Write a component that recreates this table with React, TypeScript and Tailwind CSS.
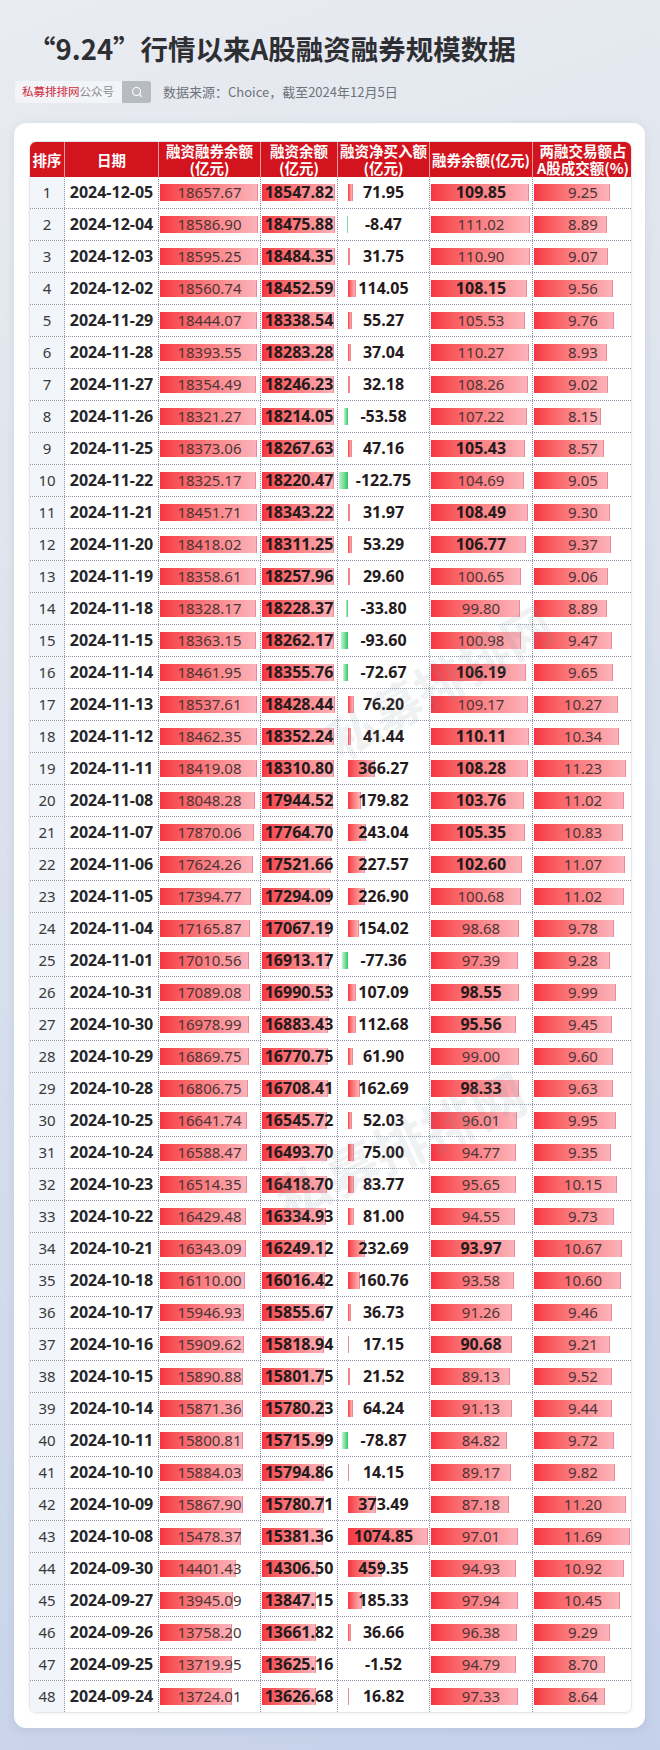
import { Search } from "lucide-react";

type Row = {
  date: string;
  total: number;
  fin: number;
  net: number;
  sec: number;
  secBold: boolean;
  pct: number;
};

const raw: [string, number, number, number, number, boolean, number][] = [
  ["2024-12-05", 18657.67, 18547.82, 71.95, 109.85, true, 9.25],
  ["2024-12-04", 18586.9, 18475.88, -8.47, 111.02, false, 8.89],
  ["2024-12-03", 18595.25, 18484.35, 31.75, 110.9, false, 9.07],
  ["2024-12-02", 18560.74, 18452.59, 114.05, 108.15, true, 9.56],
  ["2024-11-29", 18444.07, 18338.54, 55.27, 105.53, false, 9.76],
  ["2024-11-28", 18393.55, 18283.28, 37.04, 110.27, false, 8.93],
  ["2024-11-27", 18354.49, 18246.23, 32.18, 108.26, false, 9.02],
  ["2024-11-26", 18321.27, 18214.05, -53.58, 107.22, false, 8.15],
  ["2024-11-25", 18373.06, 18267.63, 47.16, 105.43, true, 8.57],
  ["2024-11-22", 18325.17, 18220.47, -122.75, 104.69, false, 9.05],
  ["2024-11-21", 18451.71, 18343.22, 31.97, 108.49, true, 9.3],
  ["2024-11-20", 18418.02, 18311.25, 53.29, 106.77, true, 9.37],
  ["2024-11-19", 18358.61, 18257.96, 29.6, 100.65, false, 9.06],
  ["2024-11-18", 18328.17, 18228.37, -33.8, 99.8, false, 8.89],
  ["2024-11-15", 18363.15, 18262.17, -93.6, 100.98, false, 9.47],
  ["2024-11-14", 18461.95, 18355.76, -72.67, 106.19, true, 9.65],
  ["2024-11-13", 18537.61, 18428.44, 76.2, 109.17, false, 10.27],
  ["2024-11-12", 18462.35, 18352.24, 41.44, 110.11, true, 10.34],
  ["2024-11-11", 18419.08, 18310.8, 366.27, 108.28, true, 11.23],
  ["2024-11-08", 18048.28, 17944.52, 179.82, 103.76, true, 11.02],
  ["2024-11-07", 17870.06, 17764.7, 243.04, 105.35, true, 10.83],
  ["2024-11-06", 17624.26, 17521.66, 227.57, 102.6, true, 11.07],
  ["2024-11-05", 17394.77, 17294.09, 226.9, 100.68, false, 11.02],
  ["2024-11-04", 17165.87, 17067.19, 154.02, 98.68, false, 9.78],
  ["2024-11-01", 17010.56, 16913.17, -77.36, 97.39, false, 9.28],
  ["2024-10-31", 17089.08, 16990.53, 107.09, 98.55, true, 9.99],
  ["2024-10-30", 16978.99, 16883.43, 112.68, 95.56, true, 9.45],
  ["2024-10-29", 16869.75, 16770.75, 61.9, 99.0, false, 9.6],
  ["2024-10-28", 16806.75, 16708.41, 162.69, 98.33, true, 9.63],
  ["2024-10-25", 16641.74, 16545.72, 52.03, 96.01, false, 9.95],
  ["2024-10-24", 16588.47, 16493.7, 75.0, 94.77, false, 9.35],
  ["2024-10-23", 16514.35, 16418.7, 83.77, 95.65, false, 10.15],
  ["2024-10-22", 16429.48, 16334.93, 81.0, 94.55, false, 9.73],
  ["2024-10-21", 16343.09, 16249.12, 232.69, 93.97, true, 10.67],
  ["2024-10-18", 16110.0, 16016.42, 160.76, 93.58, false, 10.6],
  ["2024-10-17", 15946.93, 15855.67, 36.73, 91.26, false, 9.46],
  ["2024-10-16", 15909.62, 15818.94, 17.15, 90.68, true, 9.21],
  ["2024-10-15", 15890.88, 15801.75, 21.52, 89.13, false, 9.52],
  ["2024-10-14", 15871.36, 15780.23, 64.24, 91.13, false, 9.44],
  ["2024-10-11", 15800.81, 15715.99, -78.87, 84.82, false, 9.72],
  ["2024-10-10", 15884.03, 15794.86, 14.15, 89.17, false, 9.82],
  ["2024-10-09", 15867.9, 15780.71, 373.49, 87.18, false, 11.2],
  ["2024-10-08", 15478.37, 15381.36, 1074.85, 97.01, false, 11.69],
  ["2024-09-30", 14401.43, 14306.5, 459.35, 94.93, false, 10.92],
  ["2024-09-27", 13945.09, 13847.15, 185.33, 97.94, false, 10.45],
  ["2024-09-26", 13758.2, 13661.82, 36.66, 96.38, false, 9.29],
  ["2024-09-25", 13719.95, 13625.16, -1.52, 94.79, false, 8.7],
  ["2024-09-24", 13724.01, 13626.68, 16.82, 97.33, false, 8.64],
];

const rows: Row[] = raw.map(([date, total, fin, net, sec, secBold, pct]) => ({
  date, total, fin, net, sec, secBold, pct,
}));

const maxTotal = Math.max(...rows.map(r => r.total));
const maxFin = Math.max(...rows.map(r => r.fin));
const maxSec = Math.max(...rows.map(r => r.sec));
const maxPct = Math.max(...rows.map(r => r.pct));
const maxPos = Math.max(...rows.map(r => r.net));
const maxNeg = Math.max(...rows.map(r => -r.net));

const GRID = "grid grid-cols-[35px_94px_102px_77px_92px_103px_100px]";
const NUM = "'Noto Sans', 'Noto Sans CJK SC', sans-serif";
const CJK = "'Noto Sans CJK SC', sans-serif";

const BarCell = ({ value, max, width, bold, last }: { value: number; max: number; width: number; bold?: boolean; last?: boolean }) => {
  const w = ((width - 4) * value) / max;
  return (
    <div className={last ? "relative flex items-center justify-center h-full" : "relative flex items-center justify-center h-full border-r border-dotted border-[#8e98a8]"}>
      <div
        className="absolute left-px top-[7px] h-[17px] bg-linear-to-r from-[#f53442] to-[#fbb3bb] border-r border-[#f08893]"
        style={{ width: w }}
      />
      <span className={bold ? "relative text-[16px] font-bold text-[#251a1c]" : "relative text-[15px] text-[#4b3538]"}>
        {value.toFixed(2)}
      </span>
    </div>
  );
};

const NetCell = ({ value }: { value: number }) => {
  const inner = 89;
  const axis = Math.round((inner * maxNeg) / (maxNeg + maxPos));
  const posW = ((inner - axis) * Math.max(value, 0)) / maxPos;
  const negW = (axis * Math.max(-value, 0)) / maxNeg;
  return (
    <div className="relative flex items-center justify-center h-full border-r border-dotted border-[#8e98a8]">
      {value >= 0 ? (
        <div
          className="absolute top-[7px] h-[17px] bg-linear-to-r from-[#f53442] to-[#fbb3bb] border-r border-[#f08893]"
          style={{ left: 1 + axis, width: posW }}
        />
      ) : (
        <div
          className="absolute top-[7px] h-[17px] bg-linear-to-l from-[#1fc766] to-[#bdf1d1]"
          style={{ left: 1 + axis - negW, width: negW }}
        />
      )}
      <span className="relative text-[16px] font-bold text-[#251a1c]">{value.toFixed(2)}</span>
    </div>
  );
};

const HeadCell = ({ lines, last }: { lines: string[]; last?: boolean }) => (
  <div
    className={
      last
        ? "flex flex-col items-center justify-center h-[35px] overflow-hidden leading-[17px] text-center"
        : "flex flex-col items-center justify-center h-[35px] overflow-hidden leading-[17px] text-center border-r border-[#ec9a9d]"
    }
  >
    {lines.map(l => (
      <span key={l} className="whitespace-nowrap">{l}</span>
    ))}
  </div>
);

export default function App() {
  return (
    <div
      className="w-[660px] h-[1750px] overflow-hidden bg-[linear-gradient(160deg,#e9ecf1_0%,#dde3ed_35%,#c5d1ea_100%)]"
      style={{ fontFamily: NUM }}
    >
      <div className="pt-[35px] pl-[28px]">
        <h1 className="text-[27.5px] leading-none font-bold text-[#2e2f33]" style={{ fontFamily: CJK }}>
          “9.24”行情以来A股融资融券规模数据
        </h1>
      </div>

      <div className="flex items-center mt-[18px] ml-[15px] h-[22px]" style={{ fontFamily: CJK }}>
        <div className="flex items-center h-full w-[107px] pl-[7px] bg-[#f3f4f7] rounded-l-[3px] text-[11.5px] leading-none">
          <span className="text-[#d0283b]">私募排排网</span>
          <span className="text-[#8a8d93]">公众号</span>
        </div>
        <div className="flex items-center justify-center h-full w-[29px] bg-[#b7bbc2] rounded-r-[3px]">
          <Search className="w-[12px] h-[12px] text-white" strokeWidth={2.2} />
        </div>
        <span className="ml-[12px] text-[13px] text-[#6f737a]">数据来源：Choice，截至2024年12月5日</span>
      </div>

      <div className="relative mt-[20px] ml-[14px] w-[631px] rounded-[12px] bg-white pt-[18px] pl-[15px] pr-[13px] pb-[15px] shadow-[0_2px_10px_rgba(70,90,130,0.12)]">
        <div className="rounded-[7px] overflow-hidden border border-[#e3e7ee] shadow-[0_1px_3px_rgba(0,0,0,0.06)]">
          <div className={`${GRID} bg-[#d3141e] text-white font-bold text-[14.5px]`} style={{ fontFamily: CJK }}>
            <HeadCell lines={["排序"]} />
            <HeadCell lines={["日期"]} />
            <HeadCell lines={["融资融券余额", "(亿元)"]} />
            <HeadCell lines={["融资余额", "(亿元)"]} />
            <HeadCell lines={["融资净买入额", "(亿元)"]} />
            <HeadCell lines={["融券余额(亿元)"]} />
            <HeadCell lines={["两融交易额占", "A股成交额(%)"]} last />
          </div>

          {rows.map((r, i) => (
            <div
              key={r.date}
              className={
                i === rows.length - 1
                  ? `${GRID} h-[31px]`
                  : `${GRID} h-[32px] border-b border-dotted border-[#8e98a8]`
              }
            >
              <div className="flex items-center justify-center h-full bg-[#f2f5f9] border-r border-dotted border-[#8e98a8] text-[15px] text-[#3a3a3e]">
                {i + 1}
              </div>
              <div className="flex items-center justify-center h-full border-r border-dotted border-[#8e98a8] text-[16px] font-bold text-[#262628]">
                {r.date}
              </div>
              <BarCell value={r.total} max={maxTotal} width={102} />
              <BarCell value={r.fin} max={maxFin} width={77} bold />
              <NetCell value={r.net} />
              <BarCell value={r.sec} max={maxSec} width={103} bold={r.secBold} />
              <BarCell value={r.pct} max={maxPct} width={100} last />
            </div>
          ))}
        </div>

        <span
          className="pointer-events-none absolute left-[300px] top-[520px] text-[50px] font-bold text-[#8a93a0] opacity-[0.12] -rotate-[30deg] whitespace-nowrap"
          style={{ fontFamily: CJK }}
        >
          私募排排网
        </span>
        <span
          className="pointer-events-none absolute left-[250px] top-[980px] text-[54px] font-bold text-[#8a93a0] opacity-[0.12] -rotate-[25deg] whitespace-nowrap"
          style={{ fontFamily: CJK }}
        >
          私募排排网
        </span>
      </div>
    </div>
  );
}
